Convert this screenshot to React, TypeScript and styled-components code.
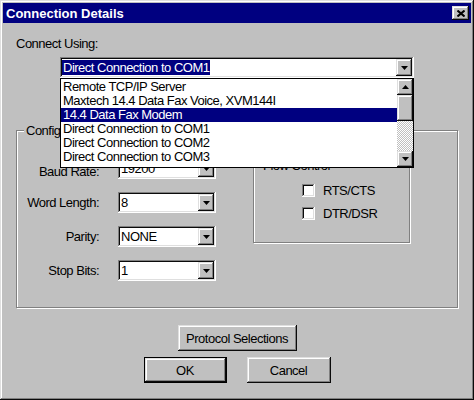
import React from 'react'
import styled, { createGlobalStyle, css } from 'styled-components'

const GlobalStyle = createGlobalStyle`
    * { box-sizing: border-box; }
    html, body { margin: 0; padding: 0; background: #c0c0c0; }
    body {
        font-family: "Liberation Sans", Arial, sans-serif;
        font-size: 13px;
        letter-spacing: -0.5px;
        color: #000;
    }
`

// Win95 bevels
const raised = css`
    background: #c0c0c0;
    box-shadow: inset -1px -1px #0a0a0a, inset 1px 1px #dfdfdf, inset -2px -2px #808080, inset 2px 2px #fff;
`

const sunken = css`
    background: #fff;
    box-shadow: inset -1px -1px #fff, inset 1px 1px #808080, inset -2px -2px #dfdfdf, inset 2px 2px #0a0a0a;
`

const Window = styled.div`
    width: 474px;
    height: 400px;
    padding: 3px;
    display: flex;
    flex-direction: column;
    ${raised};
`

const TitleBar = styled.div`
    height: 20px;
    background: #000080;
    display: flex;
    align-items: center;
    justify-content: space-between;
    padding: 0 2px 0 3px;
`

const TitleText = styled.span`
    color: #fff;
    font-weight: bold;
    letter-spacing: 0;
`

const CloseButton = styled.div`
    width: 17px;
    height: 14px;
    display: flex;
    align-items: center;
    justify-content: center;
    ${raised};
`

const Body = styled.div`
    flex: 1;
    display: flex;
    flex-direction: column;
    padding: 0 13px;
`

const Caption = styled.div`
    margin-top: 13px;
    line-height: 15px;
`

const ComboWrap = styled.div<{ $width: number; $open?: boolean }>`
    position: relative;
    z-index: ${p => (p.$open ? 5 : 'auto')};
    width: ${p => p.$width}px;
    height: 21px;
`

const MainComboSlot = styled.div`
    margin: 6px 0 0 44px;
`

const ComboField = styled.div`
    height: 100%;
    display: flex;
    align-items: center;
    padding: 2px;
    ${sunken};
`

const ComboText = styled.div`
    flex: 1;
    padding-left: 1px;
    white-space: nowrap;
    overflow: hidden;
    line-height: 15px;
`

const SelectedText = styled.span`
    background: #000080;
    color: #fff;
    margin-left: -1px;
    padding: 0 1px;
`

const ArrowButton = styled.div<{ $h?: number }>`
    width: 16px;
    height: ${p => p.$h ?? 17}px;
    display: flex;
    align-items: center;
    justify-content: center;
    flex-shrink: 0;
    ${raised};
`

const DropList = styled.div`
    position: absolute;
    top: 100%;
    left: 0;
    width: 100%;
    height: 90px;
    border: 1px solid #000;
    background: #fff;
    display: flex;
`

const ListItems = styled.div`
    flex: 1;
    padding-top: 1px;
`

const ListItem = styled.div<{ $selected?: boolean }>`
    height: 14px;
    line-height: 14px;
    padding-left: 2px;
    white-space: nowrap;
    background: ${p => (p.$selected ? '#000080' : 'transparent')};
    color: ${p => (p.$selected ? '#fff' : '#000')};
`

const ScrollBar = styled.div`
    width: 16px;
    display: flex;
    flex-direction: column;
`

const ScrollThumb = styled.div`
    height: 26px;
    ${raised};
`

const ScrollTrack = styled.div`
    flex: 1;
    background: repeating-conic-gradient(#c0c0c0 0 25%, #fff 0 50%) 0 0 / 2px 2px;
`

const GroupBox = styled.div<{ $width?: number; $height?: number }>`
    display: flex;
    flex-direction: column;
    border: 1px solid #808080;
    box-shadow: inset 1px 1px #fff, 1px 1px #fff;
    ${p => p.$width && `width: ${p.$width}px;`}
    ${p => p.$height && `height: ${p.$height}px;`}
`

const Legend = styled.div`
    align-self: flex-start;
    margin: -8px 0 0 7px;
    padding: 0 2px;
    line-height: 15px;
    background: #c0c0c0;
`

const ConfigGroup = styled(GroupBox)`
    margin-top: 52px;
`

const ConfigContent = styled.div`
    display: flex;
    align-items: flex-start;
    padding: 20px 0 26px 8px;
`

const SettingsColumn = styled.div`
    display: flex;
    flex-direction: column;
    gap: 13px;
`

const SettingRow = styled.div`
    display: flex;
    align-items: center;
`

const SettingLabel = styled.div<{ $drop?: number }>`
    width: 74px;
    margin-right: 19px;
    padding-top: ${p => p.$drop ?? 0}px;
    text-align: right;
`

const FlowGroup = styled(GroupBox)`
    margin: 7px 0 0 37px;
`

const CheckList = styled.div`
    display: flex;
    flex-direction: column;
    gap: 10px;
    margin-top: 11px;
    padding-left: 48px;
`

const CheckRow = styled.div`
    display: flex;
    align-items: center;
    line-height: 13px;
`

const CheckBox = styled.div`
    width: 13px;
    height: 13px;
    margin-right: 8px;
    ${sunken};
`

const ButtonArea = styled.div`
    display: flex;
    flex-direction: column;
    align-items: center;
    margin-top: 17px;
    gap: 6px;
`

const ButtonRow = styled.div`
    display: flex;
    gap: 20px;
`

const Button = styled.div<{ $width: number; $default?: boolean }>`
    width: ${p => p.$width}px;
    height: 26px;
    display: flex;
    align-items: center;
    justify-content: center;
    ${raised};
    ${p => p.$default && css`
        border: 1px solid #000;
    `}
`

const DownArrow = () => (
    <svg width="7" height="4" viewBox="0 0 7 4">
        <polygon points="0,0 7,0 3.5,4" fill="#000" />
    </svg>
)

const UpArrow = () => (
    <svg width="7" height="4" viewBox="0 0 7 4">
        <polygon points="0,4 7,4 3.5,0" fill="#000" />
    </svg>
)

const CloseGlyph = () => (
    <svg width="8" height="7" viewBox="0 0 8 7">
        <path d="M0.5 0.5 L7.5 6.5 M7.5 0.5 L0.5 6.5" stroke="#000" strokeWidth="2" />
    </svg>
)

const connections = [
    'Remote TCP/IP Server',
    'Maxtech 14.4 Data Fax Voice, XVM144I',
    '14.4 Data Fax Modem',
    'Direct Connection to COM1',
    'Direct Connection to COM2',
    'Direct Connection to COM3',
]

// the baud rate label sits a few pixels lower than the others in the original
const settings = [
    { label: 'Baud Rate:', value: '19200', drop: 6 },
    { label: 'Word Length:', value: '8' },
    { label: 'Parity:', value: 'NONE' },
    { label: 'Stop Bits:', value: '1' },
]

const Combo = ({ width, children }: { width: number; children: React.ReactNode }) => (
    <ComboWrap $width={width}>
        <ComboField>
            <ComboText>{children}</ComboText>
            <ArrowButton><DownArrow /></ArrowButton>
        </ComboField>
    </ComboWrap>
)

export default function App() {
    return <>
        <GlobalStyle />
        <Window>
            <TitleBar>
                <TitleText>Connection Details</TitleText>
                <CloseButton><CloseGlyph /></CloseButton>
            </TitleBar>

            <Body>
                <Caption>Connect Using:</Caption>
                <MainComboSlot>
                    <ComboWrap $width={354} $open>
                        <ComboField>
                            <ComboText><SelectedText>Direct Connection to COM1</SelectedText></ComboText>
                            <ArrowButton><DownArrow /></ArrowButton>
                        </ComboField>
                        <DropList>
                            <ListItems>
                                {connections.map(c => (
                                    <ListItem key={c} $selected={c === '14.4 Data Fax Modem'}>{c}</ListItem>
                                ))}
                            </ListItems>
                            <ScrollBar>
                                <ArrowButton $h={16}><UpArrow /></ArrowButton>
                                <ScrollThumb />
                                <ScrollTrack />
                                <ArrowButton $h={16}><DownArrow /></ArrowButton>
                            </ScrollBar>
                        </DropList>
                    </ComboWrap>
                </MainComboSlot>

                <ConfigGroup>
                    <Legend>Configuration</Legend>
                    <ConfigContent>
                        <SettingsColumn>
                            {settings.map(s => (
                                <SettingRow key={s.label}>
                                    <SettingLabel $drop={s.drop}>{s.label}</SettingLabel>
                                    <Combo width={98}>{s.value}</Combo>
                                </SettingRow>
                            ))}
                        </SettingsColumn>
                        <FlowGroup $width={157} $height={78}>
                            <Legend>Flow Control</Legend>
                            <CheckList>
                                <CheckRow><CheckBox />RTS/CTS</CheckRow>
                                <CheckRow><CheckBox />DTR/DSR</CheckRow>
                            </CheckList>
                        </FlowGroup>
                    </ConfigContent>
                </ConfigGroup>

                <ButtonArea>
                    <Button $width={119}>Protocol Selections</Button>
                    <ButtonRow>
                        <Button $width={83} $default>OK</Button>
                        <Button $width={84}>Cancel</Button>
                    </ButtonRow>
                </ButtonArea>
            </Body>
        </Window>
    </>
}
